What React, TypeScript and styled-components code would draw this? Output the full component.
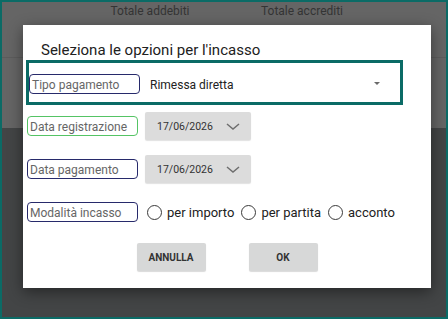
import styled, { createGlobalStyle } from "styled-components";

const GlobalStyle = createGlobalStyle`
  html, body {
    margin: 0;
    padding: 0;
    background: #434546;
    font-family: Roboto, "Liberation Sans", sans-serif;
  }
`;

const S = {
  Frame: styled.div`
    position: relative;
    width: 448px;
    height: 319px;
    box-sizing: border-box;
    border: 2px solid #0b6b66;
    display: flex;
    flex-direction: column;
    overflow: hidden;
    background: #434546;
  `,
  Header: styled.div`
    height: 55px;
    display: grid;
    grid-template-columns: 72px 152px 152px 1fr;
    align-items: start;
    background: #656565;
    border-bottom: 1px solid #5c5c5c;
  `,
  HeaderCell: styled.div<{ col: number }>`
    grid-column: ${(p) => p.col};
    text-align: center;
    font-size: 12px;
    line-height: 16px;
    padding-top: 1px;
    color: #343434;
  `,
  Band: styled.div`
    height: 70px;
    background: #656565;
  `,
  Rest: styled.div`
    flex: 1;
    background: #434546;
  `,
  Dialog: styled.div`
    position: absolute;
    left: 21px;
    top: 23px;
    width: 408px;
    box-sizing: border-box;
    background: #ffffff;
    box-shadow: 0 4px 14px rgba(0, 0, 0, 0.45);
    padding: 16px 0 17px 3px;
    display: flex;
    flex-direction: column;
  `,
  Title: styled.div`
    font-size: 15px;
    line-height: 18px;
    color: #212121;
    padding-left: 15px;
    margin-bottom: 1px;
  `,
  Highlight: styled.div`
    width: 377px;
    height: 45px;
    box-sizing: border-box;
    border: 3px solid #0b6b66;
    display: flex;
    align-items: center;
    padding: 2px 20px 0 0;
  `,
  Row: styled.div<{ gap: number; top: number }>`
    display: flex;
    align-items: center;
    height: 28px;
    padding-left: 1px;
    gap: ${(p) => p.gap}px;
    margin-top: ${(p) => p.top}px;
  `,
  Label: styled.div<{ tone: string }>`
    width: 111px;
    height: 20px;
    box-sizing: border-box;
    border: 1.5px solid ${(p) => p.tone};
    border-radius: 4px;
    display: flex;
    align-items: flex-end;
    font-size: 12px;
    line-height: 14px;
    color: #666666;
    padding: 0 0 1px 2px;
    white-space: nowrap;
    overflow: hidden;
    flex-shrink: 0;
  `,
  Value: styled.div`
    margin-left: 10px;
    padding-top: 3px;
    font-size: 12px;
    color: #222222;
    flex: 1;
  `,
  Caret: styled.div`
    width: 0;
    height: 0;
    border-left: 3px solid transparent;
    border-right: 3px solid transparent;
    border-top: 3px solid #6a6a6a;
  `,
  DateBox: styled.div`
    width: 106px;
    height: 28px;
    box-sizing: border-box;
    background: #dcdcdc;
    border-radius: 2px;
    box-shadow: 0 1px 1px rgba(0, 0, 0, 0.12);
    display: flex;
    align-items: center;
    justify-content: space-between;
    padding: 0 11px 0 12px;
    font-size: 10.5px;
    color: #333333;
  `,
  Radios: styled.div`
    display: flex;
    align-items: center;
    margin-left: 2px;
  `,
  Radio: styled.label`
    display: flex;
    align-items: center;
    gap: 5px;
    margin-right: 7px;
    font-size: 13px;
    color: #222222;
  `,
  Circle: styled.span`
    width: 15px;
    height: 15px;
    box-sizing: border-box;
    border: 1.5px solid #3a3a3a;
    border-radius: 50%;
  `,
  Buttons: styled.div`
    display: flex;
    justify-content: center;
    gap: 43px;
    margin-top: 17px;
    padding-right: 3px;
  `,
  Button: styled.button`
    width: 69px;
    height: 28px;
    border: none;
    border-radius: 2px;
    background: #d7d8d8;
    box-shadow: 0 1px 1px rgba(0, 0, 0, 0.15);
    font-family: Roboto, "Liberation Sans", sans-serif;
    font-size: 10px;
    font-weight: 700;
    color: #333333;
    padding: 0;
  `,
};

function Chevron() {
  return (
    <svg width="14" height="7" viewBox="0 0 14 7">
      <path d="M1 1 L7 6 L13 1" fill="none" stroke="#6e6e6e" strokeWidth="1.5" />
    </svg>
  );
}

export default function App() {
  return (
    <>
      <GlobalStyle />
      <S.Frame>
        <S.Header>
          <S.HeaderCell col={2}>Totale addebiti</S.HeaderCell>
          <S.HeaderCell col={3}>Totale accrediti</S.HeaderCell>
        </S.Header>
        <S.Band />
        <S.Rest />

        <S.Dialog>
          <S.Title>Seleziona le opzioni per l'incasso</S.Title>

          <S.Highlight>
            <S.Label tone="#272a6b">Tipo pagamento</S.Label>
            <S.Value>Rimessa diretta</S.Value>
            <S.Caret />
          </S.Highlight>

          <S.Row gap={7} top={7}>
            <S.Label tone="#55c465">Data registrazione</S.Label>
            <S.DateBox>
              17/06/2026
              <Chevron />
            </S.DateBox>
          </S.Row>

          <S.Row gap={7} top={15}>
            <S.Label tone="#272a6b">Data pagamento</S.Label>
            <S.DateBox>
              17/06/2026
              <Chevron />
            </S.DateBox>
          </S.Row>

          <S.Row gap={7} top={15}>
            <S.Label tone="#272a6b">Modalità incasso</S.Label>
            <S.Radios>
              <S.Radio><S.Circle />per importo</S.Radio>
              <S.Radio><S.Circle />per partita</S.Radio>
              <S.Radio><S.Circle />acconto</S.Radio>
            </S.Radios>
          </S.Row>

          <S.Buttons>
            <S.Button>ANNULLA</S.Button>
            <S.Button>OK</S.Button>
          </S.Buttons>
        </S.Dialog>
      </S.Frame>
    </>
  );
}
